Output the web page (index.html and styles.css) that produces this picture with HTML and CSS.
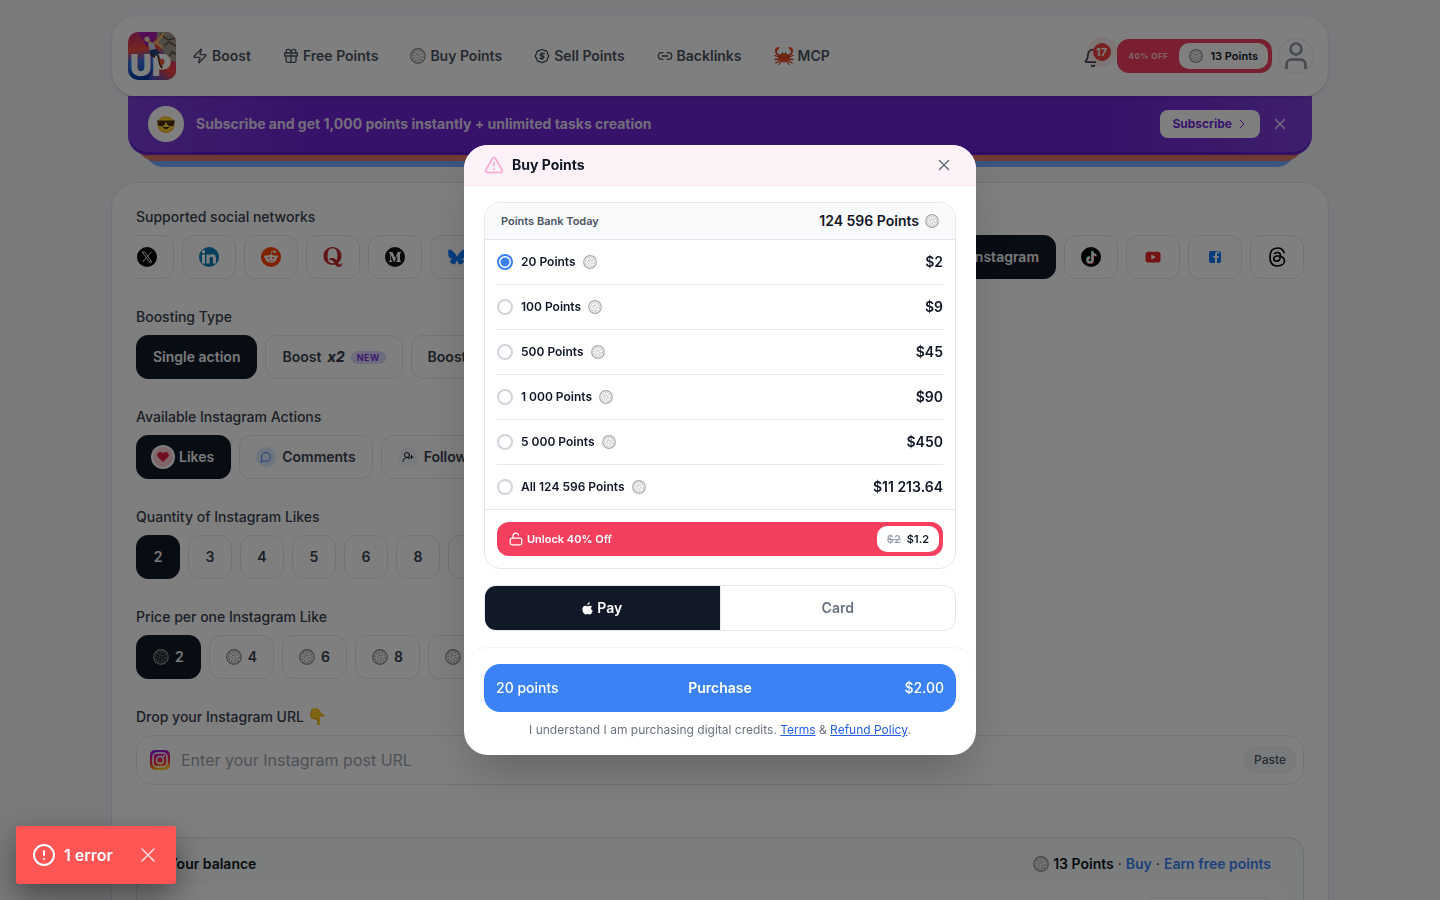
FILE: index.html
```html
<!DOCTYPE html>
<html lang="en">
<head>
<meta charset="utf-8">
<meta name="viewport" content="width=device-width, initial-scale=1">
<title>Buy Points</title>
<link rel="stylesheet" href="styles.css">
</head>
<body>
<svg class="defs" aria-hidden="true">
  <symbol id="coin" viewBox="0 0 20 20">
    <g fill="none" stroke="#8c8c8c">
      <circle cx="10" cy="10" r="9" stroke-width="1.700"/>
      <circle cx="10" cy="10" r="6.300" stroke-width="1.300" stroke-dasharray="2.600 1.200"/>
      <path d="M10 5.500v3.500M14 7l-3 2.500M14.500 11.500l-3-.5M11.500 15L10.500 12M7 14l2-2.500M5.500 10h3M7 6.500L9 9" stroke-width="1.100"/>
    </g>
  </symbol>
  <symbol id="close" viewBox="0 0 16 16"><path d="M3.500 3.500l9 9M12.500 3.500l-9 9" fill="none" stroke="currentColor" stroke-width="1.500" stroke-linecap="round"/></symbol>
</svg>

<div class="page">
  <header class="topbar">
    <a class="logo" href="#" aria-label="UP home">
      <svg viewBox="0 0 48 48">
        <defs>
          <linearGradient id="lg" x1="0" y1="0" x2="0.15" y2="1"><stop offset="0" stop-color="#c02878"/><stop offset=".4" stop-color="#ee4a3c"/><stop offset=".62" stop-color="#3d6fe0"/><stop offset="1" stop-color="#063a9c"/></linearGradient>
          <linearGradient id="lg2" x1="0" y1="1" x2="1" y2="0"><stop offset="0" stop-color="#1d4ed8"/><stop offset=".6" stop-color="#f0443c"/><stop offset="1" stop-color="#d82f60"/></linearGradient>
        </defs>
        <rect width="48" height="48" fill="url(#lg)"/>
        <path d="M20 48L30 30l18-2v20z" fill="url(#lg2)"/>
        <path d="M10 0h20l-5 12-7 2z" fill="#a21caf"/>
        <path d="M29 0h19v30l-9-2-4-10-6-6z" fill="#a3978a"/>
        <path d="M32 2l8 6 8-2M36 14l5-4 7 4M40 26l4-6 4 2" stroke="#5c5148" stroke-width="1.600" fill="none"/>
        <text x="2" y="44" class="logo-text">UP</text>
        <path d="M20 9l4 3 6-3 5-7M27 10l7 5" stroke="#f5b36b" stroke-width="2.200" fill="none" stroke-linecap="round"/>
        <circle cx="19" cy="7" r="2.600" fill="#e8dcb0"/>
        <path d="M20 11l6 0 2 7-6 2z" fill="#c9d6e2"/>
        <path d="M22 18l6-1 4 4-4 3-6-1z" fill="#27457e"/>
        <path d="M23 23l4 2M30 23l2 9 2 4" stroke="#4b2c20" stroke-width="2" fill="none"/>
        <path d="M31 27h5v5l-3 2z" fill="#ef5b3b"/>
      </svg>
    </a>
    <nav class="nav">
      <a href="#"><svg class="i16" viewBox="0 0 24 24"><path class="ln" d="M4 14a1 1 0 0 1-.8-1.6l9.900-10.200a.5.5 0 0 1 .9.5l-1.900 6A1 1 0 0 0 13 10h7a1 1 0 0 1 .8 1.600l-9.900 10.200a.5.5 0 0 1-.9-.5l1.900-6A1 1 0 0 0 11 14z"/></svg>Boost</a>
      <a href="#"><svg class="i16" viewBox="0 0 24 24"><path class="ln" d="M2.500 7.500h19v4.500h-19zM4.500 12v7a2.500 2.500 0 0 0 2.500 2.500h10a2.500 2.500 0 0 0 2.500-2.500v-7M12 7.500v14M7.500 7.500a2.500 2.500 0 0 1 0-5.500C10.500 2 12 5 12 7.500c0-2.500 1.500-5.500 4.500-5.500a2.500 2.500 0 0 1 0 5.500"/></svg>Free Points</a>
      <a href="#"><svg class="i16"><use href="#coin"/></svg>Buy Points</a>
      <a href="#"><svg class="i16" viewBox="0 0 24 24"><path class="ln" d="M3.900 8.600a4 4 0 0 1 4.700-4.700 4 4 0 0 1 6.800 0 4 4 0 0 1 4.700 4.700 4 4 0 0 1 0 6.800 4 4 0 0 1-4.700 4.700 4 4 0 0 1-6.800 0 4 4 0 0 1-4.700-4.700 4 4 0 0 1 0-6.800zM15.500 8.500h-5a1.800 1.800 0 0 0 0 3.500h3a1.800 1.800 0 0 1 0 3.500h-5M12 17.500v-11"/></svg>Sell Points</a>
      <a href="#"><svg class="i16" viewBox="0 0 24 24"><path class="ln" d="M9 17H7A5 5 0 0 1 7 7h2M15 7h2a5 5 0 0 1 0 10h-2M8 12h8"/></svg>Backlinks</a>
      <a href="#"><svg class="i20" viewBox="0 0 20 20">
        <g fill="none" stroke="#c93a1c" stroke-width="1.300" stroke-linecap="round"><path d="M5 11L1 9.500M5 13l-4 .5M5.500 14.500L2 17M7 15.500L5 18.500M15 11l4-1.500M15 13l4 .5M14.500 14.500L18 17M13 15.500l2 3"/><path d="M5.500 9.500C3 8.500 1.500 6.500 2.200 4M14.500 9.500c2.500-1 4-3 3.300-5.500" stroke-width="1.700"/></g>
        <path d="M1.200 5.500C.2 3 2 .8 6.200 1 4.500 1.500 4 2.500 6 3 4 3 3.500 4 3.300 5.500zM18.800 5.500c1-2.500-.8-4.700-5-4.500 1.700.5 2.200 1.500.2 2 2 0 2.500 1 2.700 2.500z" fill="#e8502c"/>
        <path d="M10 7.500c4 0 6.500 1.700 6 4.300-.4 2.500-2.800 4.700-6 4.700s-5.600-2.200-6-4.700c-.5-2.600 2-4.300 6-4.300z" fill="#ea4f22"/>
        <path d="M5.500 11q4.500 2 9 0" stroke="#b93413" stroke-width=".8" fill="none"/>
        <path d="M8.500 8V6.500M11.500 8V6.500" stroke="#2b1a15" stroke-width="1"/>
      </svg>MCP</a>
    </nav>
    <div class="account">
      <button class="bell" type="button" aria-label="17 notifications">
        <svg class="i20" viewBox="0 0 24 24"><path class="ln" d="M10.300 21a2 2 0 0 0 3.400 0M15 17H4a1 1 0 0 1-.7-1.700C4.600 14 6 12.500 6 8a6 6 0 0 1 6-6"/></svg>
        <span class="count">17</span>
      </button>
      <button class="deal" type="button"><span class="deal-off">40% OFF</span><span class="deal-points"><svg class="i14"><use href="#coin"/></svg>13 Points</span></button>
      <button class="avatar" type="button" aria-label="Profile"><svg viewBox="0 0 28 28"><circle cx="14" cy="7" r="5.500" fill="none" stroke="#8b95a3" stroke-width="2.600"/><path d="M4.500 26v-3.500a5 5 0 0 1 5-5h9a5 5 0 0 1 5 5V26" fill="none" stroke="#8b95a3" stroke-width="2.600" stroke-linecap="round"/></svg></button>
    </div>
  </header>

  <div class="banner-wrap">
    <div class="banner">
      <span class="banner-face">😎</span>
      <strong>Subscribe and get 1,000 points instantly + unlimited tasks creation</strong>
      <button class="subscribe" type="button">Subscribe <svg class="i12" viewBox="0 0 12 12"><path d="M4 2l4 4-4 4" fill="none" stroke="currentColor" stroke-width="1"/></svg></button>
      <button class="banner-close" type="button" aria-label="Dismiss"><svg class="i16"><use href="#close"/></svg></button>
    </div>
  </div>

  <main class="card">
    <section>
      <h2>Supported social networks</h2>
      <div class="networks">
        <div class="row pull">
          <button class="opt net" type="button" aria-label="X"><svg viewBox="0 0 20 20"><circle cx="10" cy="10" r="10"/><path d="M5.200 5h2.400l7.200 10h-2.400zM14.500 5l-4 4.400M9.300 10.800L5.500 15" fill="none" stroke="#fff" stroke-width=".9"/></svg></button>
          <button class="opt net" type="button" aria-label="LinkedIn"><svg viewBox="0 0 20 20"><circle cx="10" cy="10" r="10" fill="#0a80bd"/><path d="M3 7.500h3v9H3zM7.500 7.500h3v1.200c.6-.9 1.600-1.400 2.800-1.400 2.600 0 3.700 1.600 3.700 4.200v5h-3V12c0-1.300-.4-2.200-1.600-2.200s-1.900.9-1.900 2.200v4.500h-3z" fill="#fff"/><circle cx="4.500" cy="4.800" r="1.700" fill="#fff"/></svg></button>
          <button class="opt net" type="button" aria-label="Reddit"><svg viewBox="0 0 20 20"><circle cx="10" cy="10" r="10" fill="#ff4500"/><ellipse cx="10" cy="11.700" rx="5.500" ry="4" fill="#fff"/><circle cx="4.600" cy="9.800" r="1.500" fill="#fff"/><circle cx="15.400" cy="9.800" r="1.500" fill="#fff"/><circle cx="13.800" cy="4.800" r="1.200" fill="#fff"/><path d="M10 8l.8-3.700 3 .6" fill="none" stroke="#fff" stroke-width=".8"/><circle cx="7.800" cy="11" r="1.100" fill="#ff4500"/><circle cx="12.200" cy="11" r="1.100" fill="#ff4500"/><path d="M7.800 13.500q2.200 1.500 4.400 0" fill="none" stroke="#ff4500" stroke-width=".8"/></svg></button>
          <button class="opt net" type="button" aria-label="Quora"><svg viewBox="0 0 20 20"><path fill="#c12c2c" fill-rule="evenodd" d="M9.500 0c4.800 0 9 3.600 9 9 0 3-1.300 5.300-3.300 6.900.6 1 1.200 1.600 2 1.600.9 0 1.200-.7 1.300-1.200h.9c0 1.200-.7 3.700-3.500 3.700-1.900 0-2.900-1.100-3.700-2.400-.8.300-1.700.4-2.700.4-4.800 0-9-3.700-9-9s4.200-9 9-9zm1.700 16c-.8-1.500-1.700-3-3.500-3-.4 0-.7 0-1 .2l-.6-1.200c.7-.6 1.800-1 3.200-1 2.200 0 3.400 1 4.300 2.400.5-1.200.8-2.700.8-4.400 0-5-1.500-7.800-4.900-7.800S4.600 4 4.600 9s1.500 7.200 4.900 7.200c.6 0 1.200 0 1.700-.2z"/></svg></button>
          <button class="opt net" type="button" aria-label="Medium"><svg viewBox="0 0 20 20"><circle cx="10" cy="10" r="10" fill="#111"/><path d="M4 5h3.500l2.700 6L12.700 5H16v.7l-1 .8v7l1 .8v.7h-4.700v-.7l1-.8V8L9.500 15H9L6 8v5l1.300 1.400v.6H4v-.6L5.200 13V6.800L4 5.500z" fill="#fff"/></svg></button>
          <button class="opt net" type="button" aria-label="Bluesky"><svg viewBox="0 0 20 20"><path fill="#0a7aff" d="M5 3.500c2 1.500 4.200 4.600 5 6.200.8-1.600 3-4.700 5-6.200 1.500-1.100 3.800-1.900 3.800.8 0 .5-.3 4.400-.5 5.100-.6 2.100-2.800 2.700-4.800 2.300 3.400.6 4.300 2.500 2.400 4.400-3.600 3.700-5.100-.9-5.900-3-.8 2.100-2.300 6.700-5.900 3-1.900-1.900-1-3.800 2.400-4.400-2 .4-4.200-.2-4.800-2.300-.2-.7-.5-4.600-.5-5.100 0-2.700 2.300-1.900 3.800-.8z"/></svg></button>
        </div>
        <div class="row">
          <button class="opt on" type="button"><svg class="i20"><use href="#ig"/></svg>Instagram</button>
          <button class="opt net" type="button" aria-label="TikTok"><svg viewBox="0 0 20 20"><circle cx="10" cy="10" r="10"/><g fill="none" stroke-width="2"><path d="M11 4v8.500a2.500 2.500 0 1 1-2.500-2.500M11 4c0 2 1.500 3.600 3.800 3.600" stroke="#25f4ee"/><path d="M12 5v8.500A2.500 2.500 0 1 1 9.500 11M12 5c0 2 1.500 3.600 3.800 3.600" stroke="#fe2c55"/><path d="M11.500 4.500V13A2.500 2.500 0 1 1 9 10.500M11.500 4.500c0 2 1.500 3.600 3.800 3.600" stroke="#fff"/></g></svg></button>
          <button class="opt net" type="button" aria-label="YouTube"><svg viewBox="0 0 20 20"><rect x="2.500" y="4.700" width="15" height="10.800" rx="2.500" fill="#e62626"/><path d="M8.300 7.500v5.200l4.500-2.600z" fill="#fff"/></svg></button>
          <button class="opt net" type="button" aria-label="Facebook"><svg viewBox="0 0 20 20"><rect x="4" y="4" width="12" height="12" rx="2" fill="#0877f5"/><path d="M14.500 6.200H13.200c-.9 0-1.200.5-1.200 1.200V9h2.200l-.4 1.800H12V16h-2v-5.200H8.300V9H10V7.300c0-1.800 1-2.800 2.700-2.800h1.800z" fill="#fff"/></svg></button>
          <button class="opt net" type="button" aria-label="Threads"><svg viewBox="0 0 20 20"><path fill="none" stroke="#000" stroke-width="1.700" d="M17.200 6.200C16.400 2.800 14 1 10.400 1 5.500 1 3 4.300 3 10s2.500 9 7.400 9c4.400 0 7.100-2.400 7.100-5.200 0-3.600-3.700-5-7-4.800-2.200.1-3.700 1.100-3.700 2.700 0 1.500 1.300 2.500 3 2.400 2.400-.1 3.300-1.700 3.300-4.200C14.100 7 12.700 5.500 10.400 5.500c-1.500 0-2.500.5-3.100 1.500"/></svg></button>
        </div>
      </div>
    </section>
    <section>
      <h2>Boosting Type</h2>
      <div class="row">
        <button class="opt on" type="button">Single action</button>
        <button class="opt" type="button">Boost <b class="mult">x2</b><span class="new">NEW</span></button>
        <button class="opt" type="button">Boost <b class="mult">x3</b></button>
      </div>
    </section>
    <section>
      <h2>Available Instagram Actions</h2>
      <div class="row">
        <button class="opt on" type="button"><span class="dot like"><svg viewBox="0 0 12 12"><path d="M6 11L1.200 6.200a2.900 2.900 0 0 1 0-4.200A2.900 2.900 0 0 1 6 2.400 2.900 2.900 0 0 1 10.800 2a2.900 2.900 0 0 1 0 4.200z" fill="#e11d48"/></svg></span>Likes</button>
        <button class="opt" type="button"><span class="dot comment"><svg viewBox="0 0 24 24"><path class="ln" d="M7.900 20A9 9 0 1 0 4 16.100L2 22z"/></svg></span>Comments</button>
        <button class="opt" type="button"><span class="dot follow"><svg viewBox="0 0 24 24"><path class="ln" d="M2 21a8 8 0 0 1 13.300-6M19 9v6M22 12h-6"/><circle class="ln" cx="10" cy="8" r="5"/></svg></span>Followers</button>
      </div>
    </section>
    <section>
      <h2>Quantity of Instagram Likes</h2>
      <div class="row">
        <button class="opt num on" type="button">2</button>
        <button class="opt num" type="button">3</button>
        <button class="opt num" type="button">4</button>
        <button class="opt num" type="button">5</button>
        <button class="opt num" type="button">6</button>
        <button class="opt num" type="button">8</button>
        <button class="opt num" type="button" aria-label="More"></button>
      </div>
    </section>
    <section>
      <h2>Price per one Instagram Like</h2>
      <div class="row">
        <button class="opt on" type="button"><svg class="i16"><use href="#coin"/></svg>2</button>
        <button class="opt" type="button"><svg class="i16"><use href="#coin"/></svg>4</button>
        <button class="opt" type="button"><svg class="i16"><use href="#coin"/></svg>6</button>
        <button class="opt" type="button"><svg class="i16"><use href="#coin"/></svg>8</button>
        <button class="opt" type="button"><svg class="i16"><use href="#coin"/></svg>10</button>
      </div>
    </section>
    <section>
      <h2><label for="post-url">Drop your Instagram URL <span class="point">👇</span></label></h2>
      <div class="url">
        <svg class="i20" viewBox="0 0 20 20">
          <defs><linearGradient id="igg" x1="0" y1="0" x2=".2" y2="1"><stop offset="0" stop-color="#6a1cf5"/><stop offset=".35" stop-color="#d6109a"/><stop offset=".7" stop-color="#f5332e"/><stop offset="1" stop-color="#fcc21c"/></linearGradient></defs>
          <g id="ig"><rect width="20" height="20" rx="5" fill="url(#igg)"/><rect x="3" y="3" width="14" height="14" rx="4" fill="none" stroke="#fff" stroke-width="1.500"/><circle cx="10" cy="10" r="3.500" fill="none" stroke="#fff" stroke-width="1.500"/><circle cx="14" cy="6" r="1" fill="#fff"/></g>
        </svg>
        <input id="post-url" type="text" placeholder="Enter your Instagram post URL">
        <button class="paste" type="button">Paste</button>
      </div>
    </section>
    <div class="balance">
      <div class="balance-head">
        <strong>Your balance</strong>
        <p><svg class="i16"><use href="#coin"/></svg><strong>13 Points</strong><span>·</span><a href="#">Buy</a><span>·</span><a href="#">Earn free points</a></p>
      </div>
      <div class="balance-body"><div class="balance-chip"></div></div>
    </div>
  </main>
</div>

<div class="overlay">
  <div class="modal" role="dialog" aria-modal="true" aria-labelledby="modal-title">
    <div class="modal-head">
      <svg class="i20 warn" viewBox="0 0 24 24"><path class="ln" d="M21.700 18l-8-14a2 2 0 0 0-3.500 0l-8 14A2 2 0 0 0 4 21h16a2 2 0 0 0 1.700-3zM12 9v4M12 17h.01"/></svg>
      <h1 id="modal-title">Buy Points</h1>
      <button type="button" aria-label="Close"><svg class="i16"><use href="#close"/></svg></button>
    </div>
    <div class="modal-body">
      <div class="bank">
        <div class="bank-head"><span>Points Bank Today</span><strong>124 596 Points <svg class="i14"><use href="#coin"/></svg></strong></div>
        <div class="packs">
          <label><input type="radio" name="pack" checked><span>20 Points</span><svg class="i14"><use href="#coin"/></svg><b>$2</b></label>
          <label><input type="radio" name="pack"><span>100 Points</span><svg class="i14"><use href="#coin"/></svg><b>$9</b></label>
          <label><input type="radio" name="pack"><span>500 Points</span><svg class="i14"><use href="#coin"/></svg><b>$45</b></label>
          <label><input type="radio" name="pack"><span>1 000 Points</span><svg class="i14"><use href="#coin"/></svg><b>$90</b></label>
          <label><input type="radio" name="pack"><span>5 000 Points</span><svg class="i14"><use href="#coin"/></svg><b>$450</b></label>
          <label><input type="radio" name="pack"><span>All 124 596 Points</span><svg class="i14"><use href="#coin"/></svg><b>$11 213.64</b></label>
        </div>
        <div class="unlock-row">
          <button class="unlock" type="button">
            <svg class="i14" viewBox="0 0 14 14"><path d="M3 6.200h8a1.800 1.800 0 0 1 1.800 1.800v3a1.800 1.800 0 0 1-1.800 1.800H3A1.800 1.800 0 0 1 1.200 11V8A1.800 1.800 0 0 1 3 6.200zM4 6V3.800a2.800 2.800 0 0 1 5.500-.7" fill="none" stroke="#fff" stroke-width="1.200" stroke-linecap="round"/></svg>
            Unlock 40% Off <span class="unlock-price"><s>$2</s> $1.2</span>
          </button>
        </div>
      </div>
      <div class="pay">
        <button class="on" type="button"><svg viewBox="0 0 12 14"><path fill="#fff" d="M8.500.2c.1 1.600-1.100 3.100-2.700 3.100C5.700 1.800 7 .3 8.500.2zM11 4.800c-1.800 1.100-1.500 3.700.7 4.600-.6 1.700-1.800 4.100-3.100 4.100-.9 0-1.300-.5-2.300-.5s-1.500.5-2.300.5C2.200 13.400.4 10.500.4 7.900c0-2.400 1.500-4 3.300-4 1.100 0 1.800.7 2.600.7S7.700 3.900 9 3.900c.8 0 1.500.3 2 .9z"/></svg>Pay</button>
        <button type="button">Card</button>
      </div>
    </div>
    <div class="modal-foot">
      <button class="purchase" type="button"><span>20 points</span><b>Purchase</b><span>$2.00</span></button>
      <p>I understand I am purchasing digital credits. <a href="#">Terms</a> &amp; <a href="#">Refund Policy</a>.</p>
    </div>
  </div>
</div>

<div class="toast" role="alert">
  <svg class="i24" viewBox="0 0 24 24"><circle cx="12" cy="12" r="10" fill="none" stroke="#fff" stroke-width="2"/><path d="M12 8v4M12 16h.01" stroke="#fff" stroke-width="2" stroke-linecap="round"/></svg>
  <span>1 error</span>
  <button type="button" aria-label="Hide errors"><svg viewBox="0 0 16 16"><path d="M2 2l12 12M14 2L2 14" stroke="#fff" stroke-width="1.500" stroke-linecap="round" fill="none"/></svg></button>
</div>
</body>
</html>
```
FILE: styles.css
```css
* { box-sizing: border-box; margin: 0; }
body {
  height: 100vh;
  overflow: hidden;
  background: #f1f4f9;
  color: #111827;
  font: 14px/20px Inter, "Noto Color Emoji", sans-serif;
}
button, input { font: inherit; color: inherit; border: 0; background: none; padding: 0; }
button { white-space: nowrap; cursor: pointer; }
a { color: inherit; text-decoration: none; }
svg { display: block; flex: none; }
.defs { position: absolute; width: 0; height: 0; }
.ln { fill: none; stroke: currentColor; stroke-width: 2; stroke-linecap: round; stroke-linejoin: round; }
.i12 { width: 12px; height: 12px; }
.i14 { width: 14px; height: 14px; }
.i16 { width: 16px; height: 16px; }
.i20 { width: 20px; height: 20px; }
.i24 { width: 24px; height: 24px; }

.page { max-width: 1248px; height: 100%; margin: 0 auto; padding: 16px; overflow: hidden; }

/* Top bar */
.topbar {
  position: relative;
  z-index: 2;
  display: flex;
  align-items: center;
  gap: 16px;
  padding: 16px;
  border-radius: 24px;
  background: #fff;
  box-shadow: 0 1px 3px rgba(0, 0, 0, .16);
}
.logo svg { width: 48px; height: 48px; border-radius: 10px; }
.logo-text { font: 900 30px Inter, sans-serif; fill: #fff; }
.nav { display: flex; gap: 32px; color: #4b5563; font-weight: 600; }
.nav a { display: flex; align-items: center; gap: 4px; }
.account { display: flex; align-items: center; margin-left: auto; }
.bell { position: relative; width: 34px; height: 28px; color: #374151; }
.bell .i20 { margin-top: 4px; }
.count {
  position: absolute;
  top: 1px;
  left: 10px;
  width: 18px;
  height: 18px;
  border-radius: 50%;
  background: #ef4444;
  box-shadow: 0 0 0 6px rgba(239, 68, 68, .1);
  color: #fff;
  font-size: 11px;
  line-height: 18px;
  font-weight: 600;
}
.deal {
  display: flex;
  align-items: center;
  gap: 11px;
  height: 34px;
  padding: 4px 4px 4px 12px;
  border-radius: 12px;
  background: #f43f5e;
  font-weight: 600;
}
.deal-off { color: #fecdd3; font-size: 8px; font-weight: 700; letter-spacing: .5px; }
.deal-points { display: flex; align-items: center; gap: 7px; height: 26px; padding: 0 10px; border-radius: 10px; background: #fff; font-size: 11px; }
.avatar { display: grid; place-items: center; width: 36px; height: 36px; margin: 0 -2px 0 6px; border: 2px solid #f3f4f6; border-radius: 50%; }
.avatar svg { width: 28px; height: 28px; }

/* Promo banner with two stacked sheets behind */
.banner-wrap { position: relative; z-index: 1; margin: 0 16px 28px; }
.banner-wrap::before, .banner-wrap::after { content: ""; position: absolute; top: 20px; border-radius: 0 0 20px 20px; }
.banner-wrap::before { left: 8px; right: 8px; bottom: -6px; z-index: -1; background: #de7568; }
.banner-wrap::after { left: 16px; right: 16px; bottom: -12px; z-index: -2; background: #76a9fa; }
.banner {
  display: flex;
  align-items: center;
  gap: 12px;
  height: 59px;
  padding: 0 24px 3px 20px;
  border-radius: 0 0 20px 20px;
  background: linear-gradient(90deg, #7c3ed8, #6c24d4 16%, #6c24d4 82%, #7c3ed8);
  box-shadow: inset 0 -3px 0 rgba(80, 10, 190, .5);
  color: #e5d8f7;
}
.banner-face { display: grid; place-items: center; width: 36px; height: 36px; border-radius: 50%; background: #fff; font-size: 16px; }
.banner strong { font-weight: 700; }
.subscribe { display: flex; align-items: center; gap: 4px; height: 28px; margin-left: auto; padding: 0 12px; border-radius: 8px; background: #fff; color: #6d28d9; font-size: 12px; font-weight: 700; }

/* Order card */
.card { padding: 24px; border-radius: 24px; background: #fff; box-shadow: 0 0 0 1px #e2e5ea; }
.card section { margin-bottom: 28px; }
h2 { margin-bottom: 8px; color: #374151; font-size: 14px; line-height: 20px; font-weight: 500; }
.row { display: flex; gap: 8px; }
.networks { display: flex; justify-content: space-between; overflow: hidden; }
.pull { margin-left: -16px; }
.opt {
  display: flex;
  align-items: center;
  gap: 6px;
  height: 44px;
  padding: 0 16px;
  border: 1px solid #e5e7eb;
  border-radius: 12px;
  color: #374151;
  font-weight: 600;
}
.opt.on { border-color: #111827; background: #111827; color: #f3f4f6; }
.net svg { width: 20px; height: 20px; }
.num { width: 44px; padding: 0; justify-content: center; }
.mult { font-style: italic; font-weight: 800; }
.new { padding: 0 6px; border-radius: 8px; background: #ddd6fe; color: #6d28d9; font-size: 9px; line-height: 13px; font-weight: 600; letter-spacing: .5px; }
.dot { display: grid; place-items: center; width: 20px; height: 20px; border-radius: 50%; }
.dot svg { width: 12px; height: 12px; }
.like { background: #fecdd3; box-shadow: 0 0 0 2px #fff; }
.comment { background: #dbeafe; color: #3b82f6; }
.follow { background: #f3f4f6; color: #111827; }
.point { font-size: 16px; line-height: 16px; }
.url { display: flex; align-items: center; gap: 11px; height: 50px; padding: 0 7px 0 13px; border: 1px solid #e5e7eb; border-radius: 16px; }
.url input { flex: 1; min-width: 0; outline: 0; font-size: 16px; }
.url input::placeholder { color: #9ca3af; }
.paste { height: 28px; padding: 0 10px; border-radius: 12px; background: #f3f4f6; color: #4b5563; font-size: 12px; font-weight: 500; }
.balance { margin-top: 52px; padding: 0 16px; border: 1px solid #d9e3df; border-radius: 16px; background: #f8fcfa; }
.balance-head { display: flex; align-items: center; justify-content: space-between; height: 48px; padding: 4px 16px 0 15px; }
.balance strong { font-weight: 600; }
.balance p { display: flex; align-items: center; gap: 4px; }
.balance a { color: #3b82f6; font-weight: 600; }
.balance-body { display: flex; justify-content: flex-end; height: 96px; padding: 11px; border-radius: 16px; background: #fff; }
.balance-chip { width: 132px; height: 32px; border: 1px solid #e5e7eb; border-radius: 12px; }

/* Modal */
.overlay { position: fixed; inset: 0; z-index: 10; display: flex; align-items: center; justify-content: center; background: rgba(0, 0, 0, .5); }
.modal { width: 512px; max-width: 100%; overflow: hidden; border-radius: 24px; background: #fff; box-shadow: 0 25px 50px -12px rgba(0, 0, 0, .25); }
.modal-head { display: flex; align-items: center; gap: 8px; height: 41px; padding: 0 24px 0 20px; border-bottom: 1px solid #fce7f3; background: #fdf2f8; }
.modal-head h1 { flex: 1; font-size: 14px; line-height: 20px; font-weight: 700; }
.modal-head button { color: #6b7280; }
.warn { color: #f9a8d4; }
.modal-body { display: grid; gap: 16px; padding: 16px 20px; }
.bank { overflow: hidden; border: 1px solid #e5e7eb; border-radius: 16px; }
.bank-head { display: flex; align-items: center; justify-content: space-between; height: 37px; padding: 0 16px; border-bottom: 1px solid #e5e7eb; background: #f9fafb; color: #4b5563; font-size: 11px; font-weight: 600; }
.bank-head strong { display: flex; align-items: center; gap: 6px; color: #111827; font-size: 14px; font-weight: 600; }
.bank svg.i14 use { opacity: .75; }
.packs { padding: 0 12px; }
.packs label { display: flex; align-items: center; height: 45px; border-bottom: 1px solid #e5e7eb; font-size: 12px; font-weight: 600; }
.packs label:last-child { height: 44px; border: 0; }
.packs span { margin: 0 7px 0 8px; }
.packs b { margin-left: auto; font-size: 14px; font-weight: 600; }
.packs input { appearance: none; width: 16px; height: 16px; border: 2px solid #d1d5db; border-radius: 50%; }
.packs input:checked { border-color: #3b82f6; background: radial-gradient(#3b82f6 4px, #fff 5px); }
.unlock-row { padding: 12px; border-top: 1px solid #e5e7eb; }
.unlock { display: flex; align-items: center; gap: 4px; width: 100%; height: 34px; padding: 4px 4px 4px 12px; border-radius: 12px; background: #f43f5e; color: #fff; font-size: 11px; font-weight: 600; }
.unlock-price { display: flex; align-items: center; gap: 6px; height: 26px; margin-left: auto; padding: 0 10px; border-radius: 10px; background: #fff; color: #111827; }
.unlock-price s { color: #9ca3af; }
.pay { display: flex; height: 46px; overflow: hidden; border: 1px solid #e5e7eb; border-radius: 12px; }
.pay button { flex: 1; display: flex; align-items: center; justify-content: center; gap: 4px; color: #6b7280; font-weight: 600; }
.pay button + button { border-left: 1px solid #e5e7eb; }
.pay .on { background: #111827; color: #fff; }
.pay svg { width: 11px; height: 13px; }
.modal-foot { padding: 16px 20px; border-top: 1px solid #f3f4f6; border-radius: 24px; }
.purchase { display: grid; grid-template-columns: 1fr auto 1fr; align-items: center; width: 100%; height: 48px; padding: 0 12px; border-radius: 16px; background: #3b82f6; color: #fff; font-weight: 500; text-align: left; }
.purchase b { font-weight: 600; }
.purchase span:last-child { text-align: right; }
.modal-foot p { padding-top: 9px; color: #6b7280; font-size: 12px; line-height: 18px; text-align: center; }
.modal-foot a { color: #2563eb; text-decoration: underline; }

/* Error toast */
.toast { position: fixed; left: 16px; bottom: 16px; z-index: 20; display: flex; align-items: center; gap: 8px; height: 58px; padding: 0 20px 0 16px; border-radius: 3px; background: #f55; box-shadow: 0 12px 30px rgba(0, 0, 0, .4); color: #fff; font-size: 16px; font-weight: 600; }
.toast button { margin-left: 19px; opacity: .8; }
.toast button svg { width: 16px; height: 16px; }
```
